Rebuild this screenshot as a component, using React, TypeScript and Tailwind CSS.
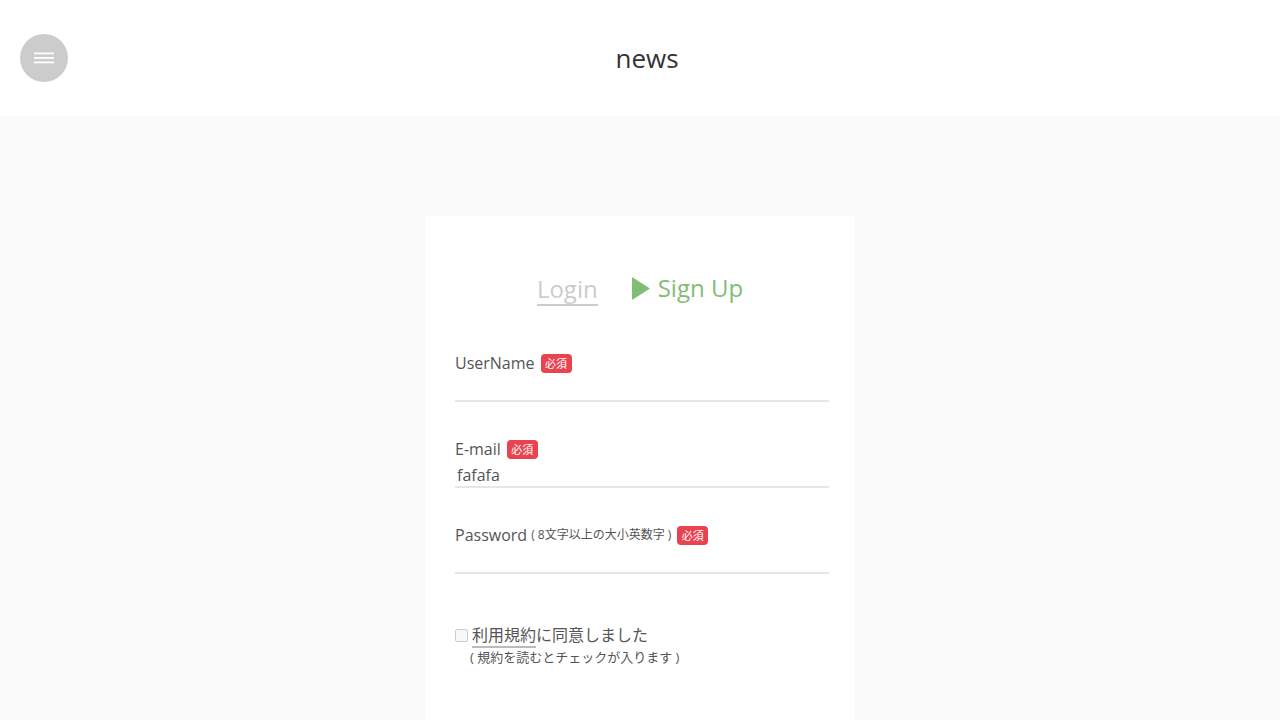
import React from "react";

function Badge() {
  return (
    <span className="inline-flex items-center justify-center h-[19px] w-[31px] rounded-[4px] bg-[#e8434f] text-white text-[11px] leading-none ml-[6px]" style={{ fontFamily: '"Noto Sans CJK JP", sans-serif' }}>
      必須
    </span>
  );
}

function Field({ label, note, value }: { label: string; note?: string; value?: string }) {
  return (
    <div className="w-[374px]">
      <div className="flex items-center h-[24px] text-[16px] text-[#555]">
        <span>{label}</span>
        {note && <span className="text-[12px] ml-[4px]">{note}</span>}
        <Badge />
      </div>
      <div className="h-[27px] border-b-2 border-[#e6e6e6] text-[16px] text-[#555] pl-[2px] leading-[28px]">
        {value}
      </div>
    </div>
  );
}

export default function App() {
  return (
    <div className="min-h-[720px] bg-[#fafafa]" style={{ fontFamily: '"Open Sans", "Noto Sans CJK JP", sans-serif' }}>
      <header className="h-[116px] bg-white flex items-center relative">
        <button className="absolute left-[20px] top-[34px] w-[48px] h-[48px] rounded-full bg-[#cccccc] flex items-center justify-center">
          <svg width="20" height="12" viewBox="0 0 20 12">
            <rect x="0" y="0.5" width="20" height="1.8" fill="#fff" />
            <rect x="0" y="5" width="20" height="1.8" fill="#fff" />
            <rect x="0" y="9.5" width="20" height="1.8" fill="#fff" />
          </svg>
        </button>
        <h1 className="w-full text-center text-[26px] text-[#333] pl-[14px] leading-none">news</h1>
      </header>
      <main className="flex justify-center pt-[100px]">
        <div className="w-[430px] bg-white pt-[56px] pb-[60px] pl-[30px]">
          <div className="flex items-center justify-center gap-[34px] pr-[30px]">
            <span className="text-[24px] text-[#cccccc] leading-[30px] border-b-2 border-[#cccccc] mt-[2px]">Login</span>
            <span className="flex items-center text-[24px] text-[#7fbe74] leading-[30px] mb-[2px]">
              <svg width="18" height="23" viewBox="0 0 18 23" className="mr-[8px]">
                <polygon points="0,0 18,11.5 0,23" fill="#7fbe74" />
              </svg>
              Sign Up
            </span>
          </div>
          <div className="mt-[45px] flex flex-col gap-[34px]">
            <Field label="UserName" />
            <div className="mt-[1px]"><Field label="E-mail" value="fafafa" /></div>
            <div className="mt-[1px]"><Field label="Password" note="( 8文字以上の大小英数字 )" /></div>
          </div>
          <div className="mt-[49px]">
            <div className="flex items-center h-[24px] text-[16px] text-[#555] leading-[24px]">
              <span className="w-[13px] h-[13px] border border-[#cccccc] rounded-[2px] bg-[#f8f8f8] mr-[4px]" />
              <span className="underline decoration-[#bbbbbb] decoration-2 underline-offset-[5px]">利用規約</span>
              <span>に同意しました</span>
            </div>
            <div className="text-[13px] text-[#555] ml-[15px] leading-[20px]">( 規約を読むとチェックが入ります )</div>
          </div>
        </div>
      </main>
    </div>
  );
}
